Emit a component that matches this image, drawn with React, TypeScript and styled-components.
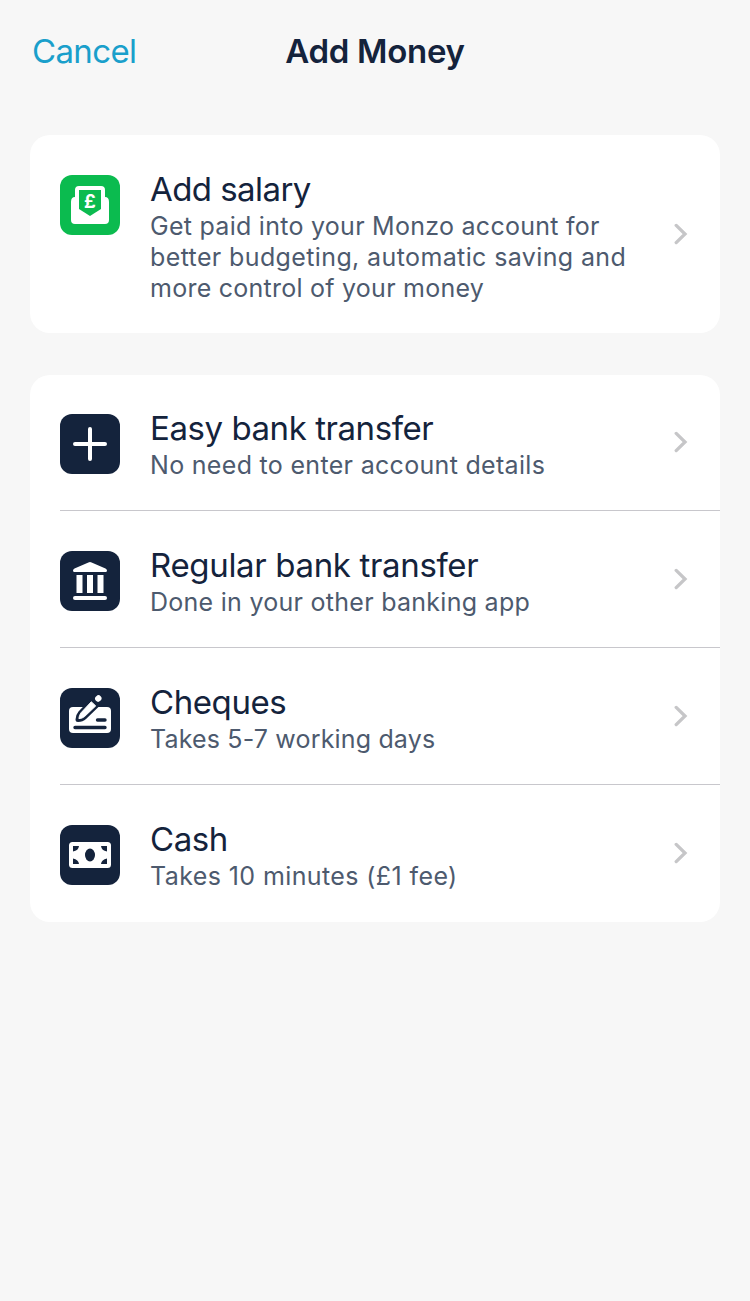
import React from "react";
import styled, { createGlobalStyle } from "styled-components";

const GlobalStyle = createGlobalStyle`
  * { box-sizing: border-box; }
  body {
    margin: 0;
    background: #f7f7f7;
    font-family: Inter, "Liberation Sans", sans-serif;
  }
`;

const Screen = styled.div`
  width: 750px;
  min-height: 1301px;
  background: #f7f7f7;
`;

const Header = styled.header`
  display: grid;
  grid-template-columns: 1fr auto 1fr;
  align-items: center;
  height: 101px;
  padding: 0 32px;
`;

const CancelButton = styled.button`
  justify-self: start;
  border: 0;
  padding: 0;
  background: none;
  color: #1a9fcb;
  font: 400 33px/40px Inter, "Liberation Sans", sans-serif;
  letter-spacing: -0.65px;
`;

const Heading = styled.h1`
  margin: 0;
  color: #14233c;
  font-size: 33px;
  line-height: 40px;
  font-weight: 600;
  letter-spacing: -0.3px;
`;

const Sections = styled.main`
  display: flex;
  flex-direction: column;
  gap: 42px;
  padding: 34px 30px 0;
`;

const Card = styled.section`
  border-radius: 20px;
  background: #fff;
  overflow: hidden;
`;

const OptionList = styled.div`
  margin-top: -1px;
  padding-bottom: 1px;
`;

const Row = styled.div<{ $tall?: boolean }>`
  display: flex;
  align-items: center;
  height: ${(p) => (p.$tall ? 198 : 136)}px;
  padding: 0 32px 0 30px;
`;

const Divider = styled.hr`
  height: 1px;
  margin: 0 0 0 30px;
  border: 0;
  background: #c8c7cc;
`;

const Tile = styled.div<{ $color: string }>`
  align-self: flex-start;
  flex: none;
  width: 60px;
  height: 60px;
  margin-top: 40px;
  border-radius: 12px;
  background: ${(p) => p.$color};
  svg { display: block; }
`;

const Copy = styled.div`
  align-self: flex-start;
  flex: 1;
  margin-left: 30px;
  padding-top: 34px;
  white-space: nowrap;
`;

const Title = styled.h2<{ $spacing: number }>`
  margin: 0 0 2px;
  color: #14233c;
  font-size: 33px;
  line-height: 40px;
  font-weight: 400;
  letter-spacing: ${(p) => p.$spacing}px;
`;

const Line = styled.p<{ $spacing: number }>`
  margin: 0;
  color: #4d5a6e;
  font-size: 25px;
  line-height: 31px;
  letter-spacing: ${(p) => p.$spacing}px;
`;

const Arrow = styled.svg`
  flex: none;
  display: block;
`;

const navy = "#14233c";
const green = "#0bbb4f";

const SalaryIcon = () => (
  <svg width="60" height="60" viewBox="0 0 60 60">
    <path d="M19 11H41Q45 11 45 15V22Q49 22 49 27V45Q49 49 45 49H15Q11 49 11 45V27Q11 22 15 22V15Q15 11 19 11Z" fill="#fff" />
    <path d="M19 15H41V34L30 41L19 34Z" fill={green} />
    <text x="30" y="33" textAnchor="middle" fontFamily="Inter, sans-serif" fontWeight="700" fontSize="18.5" fill="#fff">£</text>
  </svg>
);

const PlusIcon = () => (
  <svg width="60" height="60" viewBox="0 0 60 60">
    <path d="M30 15V45M15 30H45" fill="none" stroke="#fff" strokeWidth="4" strokeLinecap="round" />
  </svg>
);

const BankIcon = () => (
  <svg width="60" height="60" viewBox="0 0 60 60" fill="#fff">
    <path d="M28.4 11.6Q30 10.6 31.6 11.6L45.5 17.5Q47 18.3 47 19.5Q47 21 45.5 21H14.5Q13 21 13 19.5Q13 18.3 14.5 17.5Z" />
    <path d="M16.5 24H22.5V42H16.5ZM27 24H33V42H27ZM37.5 24H43.5V42H37.5Z" />
    <rect x="13" y="45" width="34" height="4" rx="2" />
  </svg>
);

const ChequeIcon = () => (
  <svg width="60" height="60" viewBox="0 0 60 60">
    <rect x="9" y="19" width="42" height="26" rx="4" fill="#fff" />
    <path d="M30 11.5L18.5 23.5Q15.5 27 15.5 31.5Q15.5 34 18 34Q23 34 26 31L40 17.5Z" fill={navy} />
    <path d="M31.3 13.8L21.2 24.6Q19 27.4 18.9 30.6Q22.2 30.6 24.6 28.5L35.7 17.9Z" fill="#fff" stroke="#fff" strokeWidth="1" strokeLinejoin="round" />
    <path d="M38.1 10.7L38.5 10.3" stroke="#fff" strokeWidth="6" strokeLinecap="round" />
    <path d="M15 39.5H45M37.5 32H45" stroke={navy} strokeWidth="3.4" strokeLinecap="round" />
  </svg>
);

const CashIcon = () => (
  <svg width="60" height="60" viewBox="0 0 60 60">
    <rect x="9" y="17" width="42" height="26" rx="3.5" fill="#fff" />
    <g fill={navy}>
      <ellipse cx="30" cy="30" rx="5" ry="6.5" />
      <path d="M13 21H19Q18.5 25.5 13 26.5ZM47 21H41Q41.5 25.5 47 26.5ZM13 39H19Q18.5 34.5 13 33.5ZM47 39H41Q41.5 34.5 47 33.5Z" />
    </g>
  </svg>
);

const Chevron = () => (
  <Arrow width="14" height="22" viewBox="0 0 14 22">
    <path d="M2.2 2.4L11 11L2.2 19.6" fill="none" stroke="#c6c6c8" strokeWidth="3.3" strokeLinecap="round" />
  </Arrow>
);

type Option = {
  title: string;
  titleSpacing: number;
  lines: { text: string; spacing: number }[];
  icon: React.ReactNode;
};

const options: Option[] = [
  {
    title: "Easy bank transfer",
    titleSpacing: -0.44,
    lines: [{ text: "No need to enter account details", spacing: 0.31 }],
    icon: <PlusIcon />,
  },
  {
    title: "Regular bank transfer",
    titleSpacing: -0.34,
    lines: [{ text: "Done in your other banking app", spacing: 0.27 }],
    icon: <BankIcon />,
  },
  {
    title: "Cheques",
    titleSpacing: -0.42,
    lines: [{ text: "Takes 5-7 working days", spacing: 0.17 }],
    icon: <ChequeIcon />,
  },
  {
    title: "Cash",
    titleSpacing: -0.45,
    lines: [{ text: "Takes 10 minutes (£1 fee)", spacing: 0.4 }],
    icon: <CashIcon />,
  },
];

const salary: Option = {
  title: "Add salary",
  titleSpacing: -0.56,
  lines: [
    { text: "Get paid into your Monzo account for", spacing: 0.27 },
    { text: "better budgeting, automatic saving and", spacing: 0.38 },
    { text: "more control of your money", spacing: 0.25 },
  ],
  icon: <SalaryIcon />,
};

const OptionRow = ({ option, featured }: { option: Option; featured?: boolean }) => (
  <Row $tall={featured}>
    <Tile $color={featured ? green : navy}>{option.icon}</Tile>
    <Copy>
      <Title $spacing={option.titleSpacing}>{option.title}</Title>
      {option.lines.map((line) => (
        <Line key={line.text} $spacing={line.spacing}>{line.text}</Line>
      ))}
    </Copy>
    <Chevron />
  </Row>
);

export default function App() {
  return (
    <Screen>
      <GlobalStyle />
      <Header>
        <CancelButton>Cancel</CancelButton>
        <Heading>Add Money</Heading>
      </Header>
      <Sections>
        <Card>
          <OptionRow option={salary} featured />
        </Card>
        <Card>
          <OptionList>
            {options.map((option, i) => (
              <React.Fragment key={option.title}>
                {i > 0 && <Divider />}
                <OptionRow option={option} />
              </React.Fragment>
            ))}
          </OptionList>
        </Card>
      </Sections>
    </Screen>
  );
}
